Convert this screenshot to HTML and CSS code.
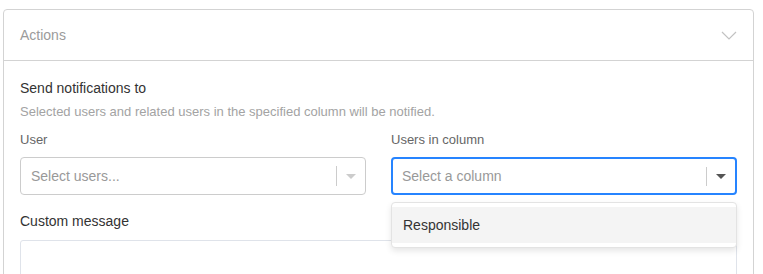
FILE: index.html
```html
<!DOCTYPE html>
<html lang="en">
<head>
  <meta charset="UTF-8" />
  <title>Actions</title>
  <link rel="stylesheet" href="styles.css">
</head>
<body>
  <div class="page">
    <div class="panel">
      <div class="panel-header">
        <span class="panel-title">Actions</span>
        <svg class="chevron" width="16" height="9" viewBox="0 0 16 9">
          <polyline points="1,1 8,8 15,1" fill="none" stroke="#c2c2c2" stroke-width="1.2" />
        </svg>
      </div>

      <div class="panel-body">
        <div class="section-title">Send notifications to</div>
        <div class="section-desc">Selected users and related users in the specified column will be notified.</div>

        <div class="fields">
          <div class="field">
            <label>User</label>
            <div class="select">
              <span class="placeholder">Select users...</span>
              <span class="indicators">
                <span class="sep"></span>
                <span class="caret"></span>
              </span>
            </div>
          </div>

          <div class="field">
            <label>Users in column</label>
            <div class="select focused">
              <span class="placeholder">Select a column</span>
              <span class="indicators">
                <span class="sep"></span>
                <span class="caret"></span>
              </span>
            </div>
            <div class="menu">
              <div class="option active">Responsible</div>
            </div>
          </div>
        </div>

        <div class="section-title message-title">Custom message</div>
        <div class="textarea"></div>
      </div>
    </div>
  </div>
</body>
</html>
```

FILE: styles.css
```css
body {
  margin: 0;
  font-family: "Liberation Sans", Arial, sans-serif;
  background: #ffffff;
  color: #333333;
  overflow: hidden;
}

.page {
  padding: 9px 0 0 3px;
}

.panel {
  width: 749px;
  border: 1px solid #d3d3d3;
  border-radius: 4px;
}

.panel-header {
  height: 50px;
  display: flex;
  align-items: center;
  justify-content: space-between;
  padding: 0 16px;
  border-bottom: 1px solid #d3d3d3;
}

.panel-title {
  font-size: 14px;
  color: #9b9b9b;
}

.panel-body {
  padding: 18px 16px 0;
}

.section-title {
  font-size: 14px;
  color: #333333;
  line-height: 18px;
}

.section-desc {
  margin-top: 7px;
  font-size: 13px;
  color: #a3a3a3;
  line-height: 16px;
}

.fields {
  display: grid;
  grid-template-columns: 1fr 1fr;
  gap: 25px;
  margin-top: 12px;
}

.field {
  position: relative;
}

.field label {
  display: block;
  font-size: 13px;
  color: #666666;
  line-height: 16px;
  margin-bottom: 9px;
}

.select {
  height: 36px;
  border: 1px solid #cccccc;
  border-radius: 4px;
  display: flex;
  align-items: center;
  justify-content: space-between;
  padding-left: 10px;
}

.select.focused {
  border: 2px solid #2684ff;
  height: 34px;
  padding-left: 9px;
}

.placeholder {
  font-size: 14px;
  color: #999999;
}

.indicators {
  display: flex;
  align-items: center;
  height: 100%;
}

.sep {
  width: 1px;
  height: 20px;
  background: #cccccc;
}

.caret {
  width: 0;
  height: 0;
  margin: 0 9px;
  border-left: 5px solid transparent;
  border-right: 5px solid transparent;
  border-top: 5px solid #cccccc;
}

.focused .caret {
  border-top-color: #555555;
}

.focused .sep {
  height: 19px;
}

.menu {
  position: absolute;
  left: 0;
  right: 0;
  top: 70px;
  background: #ffffff;
  border: 1px solid #e3e3e3;
  border-radius: 4px;
  box-shadow: 0 3px 6px rgba(0, 0, 0, 0.1);
  padding: 4px 0;
  z-index: 2;
}

.option {
  height: 36px;
  line-height: 36px;
  padding-left: 11px;
  font-size: 14px;
  color: #333333;
}

.option.active {
  background: #f4f4f4;
}

.message-title {
  margin-top: 17px;
}

.textarea {
  margin-top: 10px;
  height: 80px;
  border: 1px solid #dfe3ea;
  border-radius: 3px;
}
```
